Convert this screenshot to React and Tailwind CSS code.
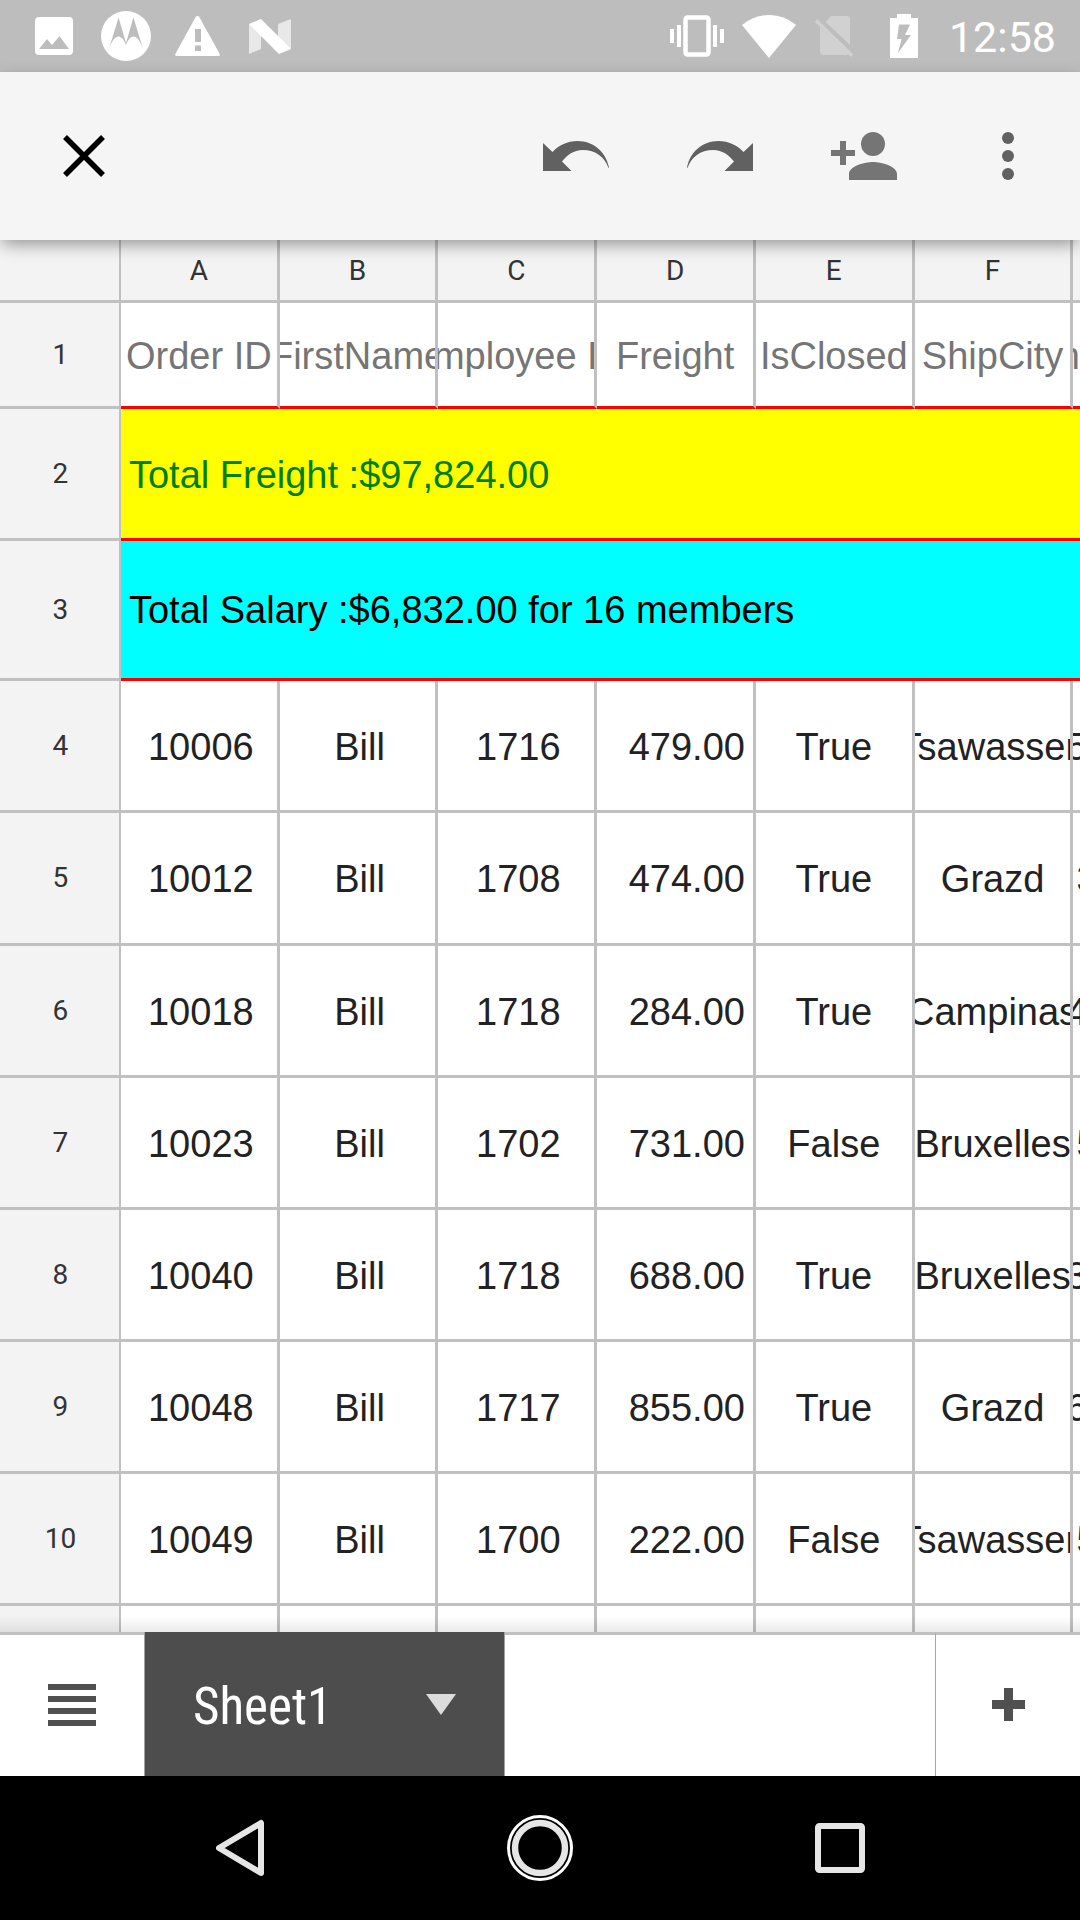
const COLS = ["A", "B", "C", "D", "E", "F", ""];

const TITLES = ["Order ID", "FirstName", "Employee ID", "Freight", "IsClosed", "ShipCity", "m"];

const ORDERS = [
  ["10006", "Bill", "1716", "479.00", "True", "Tsawassen", "5", true],
  ["10012", "Bill", "1708", "474.00", "True", "Grazd", "3", false],
  ["10018", "Bill", "1718", "284.00", "True", "Campinas", "4", true],
  ["10023", "Bill", "1702", "731.00", "False", "Bruxelles", "5", false],
  ["10040", "Bill", "1718", "688.00", "True", "Bruxelles", "3", true],
  ["10048", "Bill", "1717", "855.00", "True", "Grazd", "6", true],
  ["10049", "Bill", "1700", "222.00", "False", "Tsawassen", "5", false],
];

function StatusBar() {
  return (
    <div className="flex h-[72px] shrink-0 items-center justify-between bg-[#bdbdbd] pl-[35px] pr-6 text-white">
      <div className="flex items-center">
        <svg className="mr-7 h-[38px] w-[38px]" viewBox="0 0 38 38" fill="currentColor">
          <path fillRule="evenodd" d="M4 0h30a4 4 0 0 1 4 4v30a4 4 0 0 1-4 4H4a4 4 0 0 1-4-4V4a4 4 0 0 1 4-4zM4 32h30L24.500 19l-7.500 9-5-6z" />
        </svg>
        <svg className="mr-6 h-[50px] w-[50px]" viewBox="0 0 50 50">
          <circle cx="25" cy="25" r="25" fill="#fff" />
          <path fill="#bdbdbd" d="M17.600 6.500 8 37.800c2.500-7 5.500-11.600 9-12.300 3.500-.4 6 3.500 8 8.500 2-5 4.500-8.900 8-8.500 3.500.7 6.500 5.300 9 12.300L32.400 6.500 25 32z" />
        </svg>
        <svg className="mr-[29px] h-10 w-[45px]" viewBox="0 0 45 40">
          <path fill="#fff" d="M22.500 0c.8 0 1.400.4 1.800 1l20.400 37c.5 1 0 2-1 2H1.300c-1 0-1.500-1-1-2L20.700 1c.4-.6 1-1 1.800-1z" />
          <path fill="#bdbdbd" d="M20 13h6v13h-6zM20 29.500h6V35h-6z" />
        </svg>
        <svg className="h-[35px] w-[42px]" viewBox="0 0 42 35">
          <path fill="#e8e8e8" d="M0 5v30l12-5V12zM42 0v30L29 22V5z" />
          <path fill="#fff" d="M0 5 12 0l30 30-12 5z" />
        </svg>
      </div>
      <div className="flex items-center">
        <svg className="mr-[18px] h-[42px] w-[54px]" viewBox="0 0 54 42" fill="#fff">
          <path d="M0 14h4v14H0zM7 10h4v22H7zM43 10h4v22h-4zM50 14h4v14h-4z" />
          <rect x="15.500" y="2.500" width="23" height="37" rx="2" fill="none" stroke="#fff" strokeWidth="4.500" />
        </svg>
        <svg className="mr-[18px] h-[43px] w-[54px]" viewBox="0 0 54 43" fill="#fff">
          <path d="M0 10C8 3.500 17 0 27 0s19 3.500 27 10L27 43z" />
        </svg>
        <svg className="mr-9 h-[42px] w-10" viewBox="0 0 40 42" fill="#d1d1d1">
          <path d="M17 1h16a3 3 0 0 1 3 3v26L11.500 7zM6 12l29 27-2 1H10a4 4 0 0 1-4-4z" />
          <path d="M3 4 39 39l-2 3L1 7z" />
        </svg>
        <svg className="mr-[31px] h-11 w-7" viewBox="0 0 28 44">
          <path fill="#fff" d="M7 0h14v4h7v40H0V4h7z" />
          <path fill="#bdbdbd" d="M9 10.500h11l-5 10.500h6L8 39l3.500-14H7z" />
        </svg>
        <span className="pt-0.5 text-[43px] leading-none">12:58</span>
      </div>
    </div>
  );
}

function RedoIcon({ className }) {
  return (
    <svg className={className} viewBox="0 0 66 30" fill="#616161">
      <path d="M0 26.500C3 11 15.500 0 31.500 0 41.500 0 50 4 56.500 11L66 2v28H37.500l9.500-9.500C42 14 35 9 26.500 9 13 9 4.500 16 .5 27z" />
    </svg>
  );
}

function Toolbar() {
  return (
    <header className="relative z-10 flex h-[168px] shrink-0 items-center justify-between bg-[#f5f5f5] pl-3 shadow-[0_6px_16px_-2px_rgba(0,0,0,0.4)]">
      <button aria-label="Close" className="flex h-36 w-36 items-center justify-center">
        <svg className="h-[42px] w-[42px]" viewBox="0 0 42 42" stroke="#000" strokeWidth="5.500">
          <path d="M2 2l38 38M40 2 2 40" />
        </svg>
      </button>
      <div className="flex">
        <button aria-label="Undo" className="flex h-36 w-36 items-center justify-center">
          <RedoIcon className="h-[30px] w-[66px] -scale-x-100" />
        </button>
        <button aria-label="Redo" className="flex h-36 w-36 items-center justify-center">
          <RedoIcon className="h-[30px] w-[66px]" />
        </button>
        <button aria-label="Share" className="flex h-36 w-36 items-center justify-center">
          <svg className="h-12 w-[66px]" viewBox="0 0 66 48" fill="#757575">
            <circle cx="42" cy="12" r="12" />
            <path d="M18 48v-6c0-8 16-12 24-12s24 4 24 12v6zM9 9h6v9h9v6h-9v9H9v-9H0v-6h9z" />
          </svg>
        </button>
        <button aria-label="More options" className="flex h-36 w-36 items-center justify-center">
          <svg className="h-12 w-3" viewBox="0 0 12 48" fill="#616161">
            <circle cx="6" cy="6" r="6" />
            <circle cx="6" cy="24" r="6" />
            <circle cx="6" cy="42" r="6" />
          </svg>
        </button>
      </div>
    </header>
  );
}

const RULE = "border-b-[3px] border-[#c0c0c0]";
const CELL_TEXT = "font-['Liberation_Sans',Arial,sans-serif] text-[38px] leading-[44px]";

function RowHead({ children }) {
  return (
    <th scope="row" className={`${RULE} border-r-2 bg-[#f3f3f3] pt-0 pr-0 pb-0 pl-0.5 text-[28px] leading-8 font-normal text-[#333]`}>
      {children}
    </th>
  );
}

function Cell({ children, align = "justify-center", last }) {
  return (
    <td className={`${RULE} px-0 pt-0.5 pb-0 text-[#222] ${last ? "" : "border-r-[3px]"}`}>
      <div className={`flex overflow-hidden whitespace-nowrap ${CELL_TEXT} ${align}`}>
        <span className="shrink-0">{children}</span>
      </div>
    </td>
  );
}

function Sheet() {
  return (
    <main className="relative min-h-0 flex-1 overflow-hidden bg-white">
      <table className="w-full table-fixed border-separate border-spacing-0">
        <colgroup>
          <col className="w-[11.2%]" />
          <col className="w-[14.7%]" />
          <col className="w-[14.7%]" />
          <col className="w-[14.7%]" />
          <col className="w-[14.7%]" />
          <col className="w-[14.7%]" />
          <col className="w-[14.7%]" />
          <col />
        </colgroup>
        <thead>
          <tr className="h-[63px]">
            <td className={`${RULE} border-r-2 bg-[#f3f3f3]`} />
            {COLS.map((c, i) => (
              <th key={i} scope="col" className={`${RULE} ${i < 6 ? "border-r-[3px]" : ""} bg-[#f3f3f3] px-0 pt-0.5 pb-0 text-[28px] leading-8 font-normal text-[#333]`}>
                {c}
              </th>
            ))}
          </tr>
        </thead>
        <tbody>
          <tr className="h-[106px]">
            <RowHead>1</RowHead>
            {TITLES.map((t, i) => (
              <td key={i} className={`border-b-[3px] border-[#c0c0c0] border-b-[#f00] px-0 pt-0.5 pb-0 text-[#757575] ${i < 6 ? "border-r-[3px]" : ""}`}>
                <div className={`flex overflow-hidden whitespace-nowrap ${CELL_TEXT} ${i < 6 ? "justify-center" : "justify-end"}`}>
                  <span className="shrink-0">{t}</span>
                </div>
              </td>
            ))}
          </tr>
          <tr className="h-[132px]">
            <RowHead>2</RowHead>
            <td colSpan={7} className={`border-b-[3px] border-[#f00] bg-[#ff0] pt-0.5 pr-0 pb-0 pl-2 text-[#008000] ${CELL_TEXT}`}>
              Total Freight :$97,824.00
            </td>
          </tr>
          <tr className="h-[140px]">
            <RowHead>3</RowHead>
            <td colSpan={7} className={`border-b-[3px] border-[#f00] bg-[#0ff] p-0 pl-2 text-black ${CELL_TEXT}`}>
              Total Salary :$6,832.00 for 16 members
            </td>
          </tr>
          {ORDERS.map(([id, name, emp, freight, closed, city, next, cut], i) => (
            <tr key={id} className={i === 1 ? "h-[133px]" : "h-[132px]"}>
              <RowHead>{i + 4}</RowHead>
              <Cell align="justify-center pl-1">{id}</Cell>
              <Cell align="justify-center pl-1">{name}</Cell>
              <Cell align="justify-center pl-1">{emp}</Cell>
              <Cell align="justify-end pr-2">{freight}</Cell>
              <Cell>{closed}</Cell>
              <Cell>{city}</Cell>
              <Cell last align={cut ? "justify-center" : "justify-start pl-[3px]"}>{next}</Cell>
            </tr>
          ))}
          <tr className="h-[132px]">
            <RowHead />
            {COLS.map((c, i) => (
              <Cell key={i} last={i === 6} />
            ))}
          </tr>
        </tbody>
      </table>
      <div className="pointer-events-none absolute inset-x-0 bottom-0 h-4 bg-linear-to-t from-black/8 to-transparent" />
    </main>
  );
}

function SheetTabs() {
  return (
    <footer className="flex h-36 shrink-0 bg-white">
      <button aria-label="All sheets" className="flex w-36 items-center justify-center border-t-[3px] border-[#c0c0c0] pb-0.5">
        <svg className="h-[42px] w-12" viewBox="0 0 48 42" fill="#505050">
          <path d="M0 0h48v6H0zM0 12h48v6H0zM0 24h48v6H0zM0 36h48v6H0z" />
        </svg>
      </button>
      <button className="flex w-[361px] items-center justify-between border-x border-[#a0a0a0] bg-[#4d4d4d] px-12 text-[51px] leading-none text-white">
        <span className="pt-1 font-['Roboto_Condensed',Roboto,sans-serif] font-stretch-condensed">Sheet1</span>
        <svg className="h-[21px] w-[30px]" viewBox="0 0 30 21" fill="#dcdcdc">
          <path d="M0 0h30L15 21z" />
        </svg>
      </button>
      <div className="grow border-t-[3px] border-[#c0c0c0]" />
      <button aria-label="Add sheet" className="flex w-[145px] items-center justify-center border-t-[3px] border-l border-[#c0c0c0] border-l-[#a6a6a6] pb-0.5">
        <svg className="h-[33px] w-[33px]" viewBox="0 0 33 33" fill="#505050">
          <path d="M12 0h9v12h12v9H21v12h-9V21H0v-9h12z" />
        </svg>
      </button>
    </footer>
  );
}

function NavBar() {
  return (
    <nav className="flex h-36 shrink-0 items-center justify-center gap-[156px] bg-black">
      <button aria-label="Back" className="flex h-36 w-36 items-center justify-center">
        <svg className="h-[58px] w-[49px]" viewBox="0 0 49 58" fill="none" stroke="#e6e6e6" strokeWidth="6" strokeLinejoin="round">
          <path d="M3 29 45 4v50z" />
        </svg>
      </button>
      <button aria-label="Home" className="flex h-36 w-36 items-center justify-center">
        <svg className="h-[66px] w-[66px]" viewBox="0 0 66 66" fill="none">
          <circle cx="33" cy="33" r="31.500" stroke="#fff" strokeWidth="3" />
          <circle cx="33" cy="33" r="25" stroke="#e6e6e6" strokeWidth="6.500" />
        </svg>
      </button>
      <button aria-label="Recent apps" className="flex h-36 w-36 items-center justify-center">
        <svg className="h-[50px] w-[50px]" viewBox="0 0 50 50" fill="none" stroke="#e6e6e6" strokeWidth="6">
          <rect x="3" y="3" width="44" height="44" rx="1.500" />
        </svg>
      </button>
    </nav>
  );
}

export default function App() {
  return (
    <div className="flex h-screen flex-col bg-white font-[Roboto,sans-serif]">
      <StatusBar />
      <Toolbar />
      <Sheet />
      <SheetTabs />
      <NavBar />
    </div>
  );
}
